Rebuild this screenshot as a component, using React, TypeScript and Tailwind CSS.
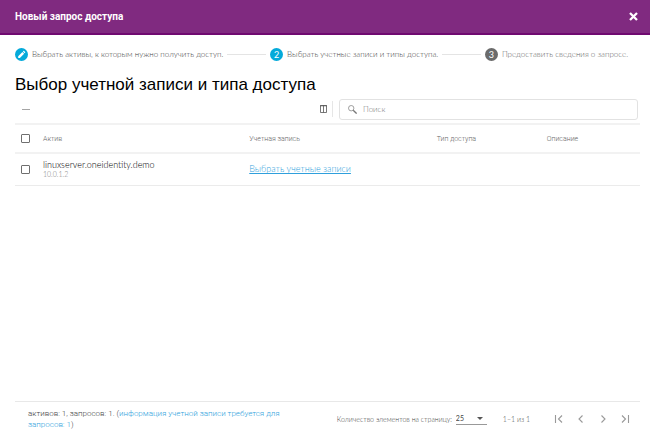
import { useState } from "react";
import { clsx } from "clsx";

interface Asset {
  id: string;
  name: string;
  address: string;
  accessType: string;
  description: string;
}

const assets: Asset[] = [
  { id: "a1", name: "linuxserver.oneidentity.demo", address: "10.0.1.2", accessType: "", description: "" },
];

const steps = [
  { id: 1, label: "Выбрать активы, к которым нужно получить доступ.", state: "done" },
  { id: 2, label: "Выбрать учетные записи и типы доступа.", state: "active" },
  { id: 3, label: "Предоставить сведения о запросе.", state: "next" },
];

const pagerButtons = [
  { label: "Первая страница", path: "M1.5 1v8M8 1.5 4.5 5 8 8.5" },
  { label: "Предыдущая страница", path: "M6.5 1.5 3 5l3.5 3.5" },
  { label: "Следующая страница", path: "M3.5 1.5 7 5 3.5 8.5" },
  { label: "Последняя страница", path: "M2 1.5 5.5 5 2 8.5M8.5 1v8" },
];

function Checkbox({ label, checked, onChange }: { label: string; checked: boolean; onChange: () => void }) {
  return (
    <input
      type="checkbox"
      aria-label={label}
      checked={checked}
      onChange={onChange}
      className="block w-[9px] h-[9px] ml-[6px] appearance-none rounded-[1px] border border-[#6f6f6f] checked:bg-[#04aada]"
    />
  );
}

function Stepper() {
  return (
    <ol className="flex items-center h-5 mt-[9px] mr-3">
      {steps.map((step, i) => (
        <li key={step.id} className={clsx("flex items-center", i < steps.length - 1 && "flex-auto")}>
          <span
            className={clsx(
              "flex items-center justify-center w-[13px] h-[13px] rounded-full text-white text-[9px] leading-none font-normal shrink-0",
              step.state === "next" ? "bg-[#6b6b6b]" : "bg-[#04aada]"
            )}
          >
            {step.state === "done" ? (
              <svg viewBox="0 0 13 13" className="w-[13px] h-[13px]" fill="white">
                <path d="m3.2 8.2 4.2-4.2 1.7 1.7-4.2 4.2H3.2zM7.9 3.5l.5-.5c.2-.2.5-.2.7 0l1 1c.2.2.2.5 0 .7l-.5.5z" />
              </svg>
            ) : (
              step.id
            )}
          </span>
          <span className={clsx("ml-1 text-[8px] leading-3 whitespace-nowrap", step.state === "next" ? "text-[#666]" : "text-[#444]")}>
            {step.label}
          </span>
          {i < steps.length - 1 && <span className="flex-1 h-px mx-1 bg-[#e4e4e4]" />}
        </li>
      ))}
    </ol>
  );
}

export default function App() {
  const [selected, setSelected] = useState<string[]>([]);
  const [query, setQuery] = useState("");

  const rows = assets.filter((a) => a.name.includes(query));
  const allSelected = rows.length > 0 && selected.length === rows.length;

  const toggle = (id: string) =>
    setSelected(selected.includes(id) ? selected.filter((s) => s !== id) : [...selected, id]);

  return (
    <div className="min-h-screen flex flex-col bg-white font-['Lato','Roboto',sans-serif] font-light">
      <header className="flex items-center justify-between h-[35px] pl-[15px] pr-3 bg-[#802a80] border-b-2 border-[#6f0a70]">
        <h1 className="text-white text-[10px] leading-4 font-['Roboto',sans-serif] font-bold">Новый запрос доступа</h1>
        <button aria-label="Закрыть" className="cursor-pointer">
          <svg viewBox="0 0 9 9" className="w-[9px] h-[9px]" stroke="white" strokeWidth="2.3">
            <path d="m1 1 7 7M8 1 1 8" />
          </svg>
        </button>
      </header>

      <main className="flex-1 flex flex-col pl-[15px] pr-[10px]">
        <Stepper />
        <h2 className="mt-[9px] text-black text-[17px] leading-6 font-['Liberation_Sans',sans-serif] font-normal">
          Выбор учетной записи и типа доступа
        </h2>

        {/* Toolbar */}
        <div className="flex items-center h-[26px] pb-[2px] pr-[2px]">
          <button aria-label="Удалить" className="ml-[7px] cursor-pointer">
            <svg viewBox="0 0 8 8" className="w-2 h-2" stroke="#a5a5a5">
              <path d="M0 4.5h8" />
            </svg>
          </button>
          <button aria-label="Столбцы" className="ml-auto cursor-pointer">
            <svg viewBox="0 0 7 8" className="w-[7px] h-2" fill="none" stroke="#555">
              <path d="M.5.5h6v7h-6zM3.5.5v7M0 .8h7" strokeWidth=".8" />
            </svg>
          </button>
          <div className="w-px h-4 mx-[5px] bg-[#e6e6e6]" />
          <label className="flex items-center w-[48%] h-[21px] ml-px pl-2 border border-[#e2e2e2] rounded-[3px]">
            <svg viewBox="0 0 9 9" className="w-[9px] h-[9px] shrink-0" fill="none" stroke="#777">
              <circle cx="3.2" cy="3.2" r="2.7" strokeWidth=".7" />
              <path d="m5.2 5.2 3.4 3.4" strokeWidth="1.3" />
            </svg>
            <input
              type="text"
              aria-label="Поиск"
              placeholder="Поиск"
              value={query}
              onChange={(e) => setQuery(e.target.value)}
              className="flex-1 min-w-0 ml-1.5 text-[8px] leading-3 text-[#555] placeholder:text-[#777] outline-none"
            />
          </label>
        </div>

        <table className="w-full table-fixed border-collapse text-left">
          <colgroup>
            <col className="w-[28px]" />
            <col className="w-[33%]" />
            <col className="w-[30%]" />
            <col className="w-[110px]" />
            <col />
          </colgroup>
          <thead>
            <tr className="h-[29px] border-y-2 border-[#f2f2f2] text-[7px] leading-3 text-[#666] font-['Roboto',sans-serif]">
              <th>
                <Checkbox
                  label="Выбрать все"
                  checked={allSelected}
                  onChange={() => setSelected(allSelected ? [] : rows.map((r) => r.id))}
                />
              </th>
              <th className="font-light">Актив</th>
              <th className="font-light">Учетная запись</th>
              <th className="font-light">Тип доступа</th>
              <th className="font-light">Описание</th>
            </tr>
          </thead>
          <tbody>
            {rows.map((row) => (
              <tr key={row.id} className="h-[32px] border-b border-[#ebebeb] text-[9px] leading-[10px]">
                <td>
                  <Checkbox label={row.name} checked={selected.includes(row.id)} onChange={() => toggle(row.id)} />
                </td>
                <td>
                  <p className="text-black">{row.name}</p>
                  <p className="text-[7px] leading-2 text-[#777]">{row.address}</p>
                </td>
                <td>
                  <a href="#accounts" className="text-[#2f9fdc] underline">Выбрать учетные записи</a>
                </td>
                <td>{row.accessType}</td>
                <td>{row.description}</td>
              </tr>
            ))}
          </tbody>
        </table>

        <footer className="flex items-center h-[34px] mt-auto pl-[13px] border-t border-[#e8e8e8]">
          <p className="w-[275px] text-[8px] leading-[11px] text-[#444] font-['Roboto',sans-serif]">
            активов: 1, запросов: 1. (
            <a href="#required" className="text-[#2f9fdc]">информация учетной записи требуется для запросов: 1</a>)
          </p>
          <div className="flex items-center ml-auto pr-[10px] text-[7px] leading-3 text-[#444]">
            <label htmlFor="page-size">Количество элементов на страницу:</label>
            <span className="relative ml-1">
              <select
                id="page-size"
                defaultValue="25"
                className="block w-[31px] h-[13px] appearance-none border-b border-[#999] text-[7px] leading-3 font-normal outline-none"
              >
                <option>25</option>
                <option>50</option>
                <option>100</option>
              </select>
              <svg viewBox="0 0 6 3" className="absolute right-1 top-[5px] w-[6px] h-[3px] pointer-events-none" fill="#555">
                <path d="M0 0h6L3 3z" />
              </svg>
            </span>
            <span className="ml-4">1–1 из 1</span>
            <div className="flex gap-3 ml-6">
              {pagerButtons.map((b) => (
                <button key={b.label} aria-label={b.label} className="cursor-pointer">
                  <svg viewBox="0 0 10 10" className="w-[10px] h-[10px]" fill="none" stroke="#999" strokeWidth="1.1">
                    <path d={b.path} />
                  </svg>
                </button>
              ))}
            </div>
          </div>
        </footer>
      </main>
    </div>
  );
}
